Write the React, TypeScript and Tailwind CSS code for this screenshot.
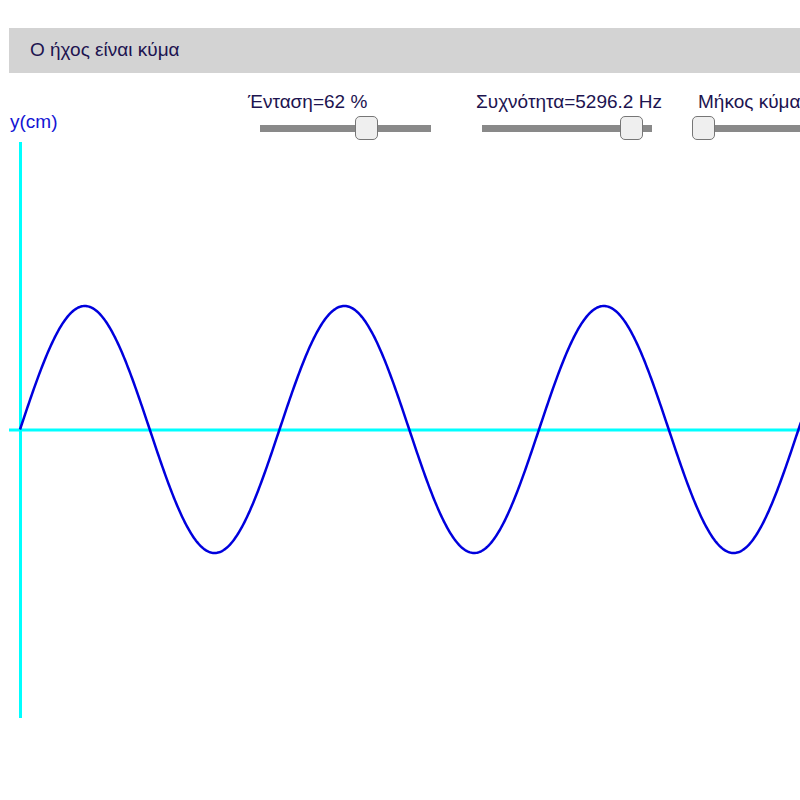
import React from "react";

interface SliderProps {
  width: number;
  value: number; // 0..1
}

function Slider({ width, value }: SliderProps) {
  const thumb = 23;
  const left = Math.round(value * (width - thumb));
  return (
    <div className="relative h-[24px]" style={{ width }}>
      <div className="absolute left-0 right-0 top-[9px] h-[7px] bg-[#898989]" />
      <div
        className="absolute top-0 h-[24px] w-[23px] rounded-[5px] border border-[#767676] bg-[#efefef]"
        style={{ left }}
      />
    </div>
  );
}

// sine curve of the wave, drawn in chart coordinates
function wavePath() {
  const x0 = 20;
  const mid = 289.5;
  const amp = 123.5;
  const period = 259.5;
  let d = "";
  for (let x = x0; x <= 801; x += 1) {
    const y = mid - amp * Math.sin((2 * Math.PI * (x - x0)) / period);
    d += (x === x0 ? "M" : "L") + x + " " + y.toFixed(2) + " ";
  }
  return d;
}

export default function App() {
  return (
    <div className="w-[800px] h-[800px] overflow-hidden bg-white font-['Liberation_Sans',Arial,sans-serif] text-[19px] text-[#1d1450]">
      {/* Title bar */}
      <div className="mt-[28px] ml-[9px] h-[45px] bg-[#d3d3d3] flex items-center pl-[21px]">
        Ο ήχος είναι κύμα
      </div>

      {/* Controls */}
      <div className="flex h-[67px] whitespace-nowrap">
        <div className="w-[248px] shrink-0 pt-[38px] pl-[10px] text-[#1414d4] leading-[22px]">
          y(cm)
        </div>
        <div className="w-[228px] shrink-0 pt-[18px]">
          <div className="leading-[22px]">Ένταση=62 %</div>
          <div className="mt-[3px] ml-[12px]">
            <Slider width={171} value={0.64} />
          </div>
        </div>
        <div className="w-[216px] shrink-0 pt-[18px]">
          <div className="leading-[22px]">Συχνότητα=5296.2 Hz</div>
          <div className="mt-[3px] ml-[6px]">
            <Slider width={170} value={0.94} />
          </div>
        </div>
        <div className="w-[200px] shrink-0 pt-[18px]">
          <div className="ml-[6px] leading-[22px]">Μήκος κύματος</div>
          <div className="mt-[3px]">
            <Slider width={171} value={0} />
          </div>
        </div>
      </div>

      {/* Chart */}
      <svg width="800" height="600" viewBox="0 0 800 600" className="block">
        <line x1="20.5" y1="2" x2="20.5" y2="578" stroke="#00ffff" strokeWidth="3" />
        <line x1="9" y1="290" x2="800" y2="290" stroke="#00ffff" strokeWidth="3" />
        <path d={wavePath()} fill="none" stroke="#0000dd" strokeWidth="2.5" />
      </svg>
    </div>
  );
}
